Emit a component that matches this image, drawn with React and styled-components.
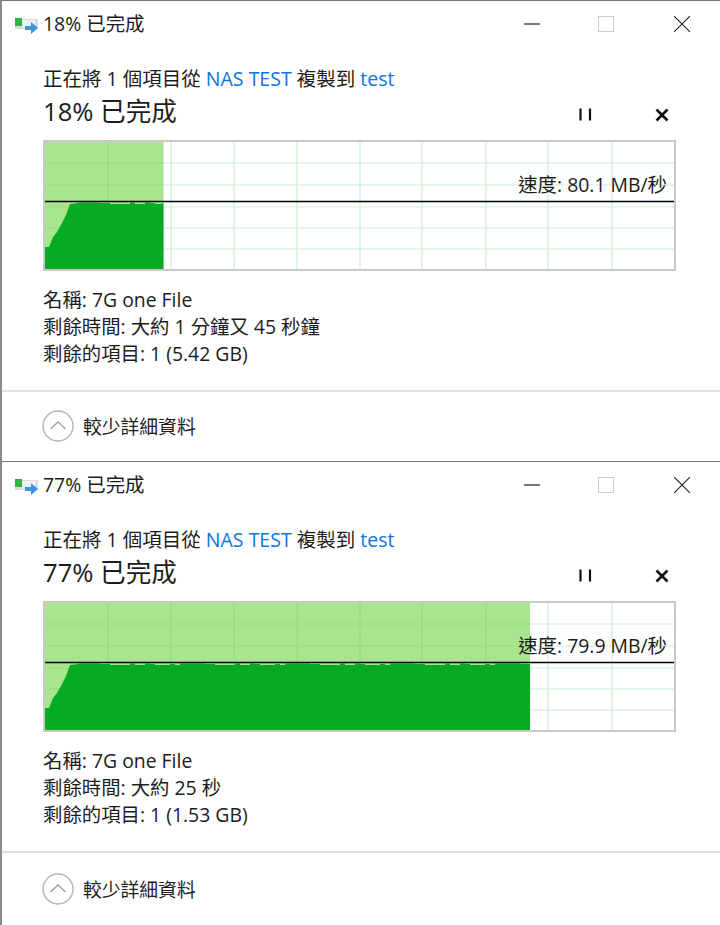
import React from "react";
import styled, { createGlobalStyle } from "styled-components";

const GlobalStyle = createGlobalStyle`
  html, body {
    margin: 0;
    padding: 0;
    background: #ffffff;
  }
  body {
    font-family: "Open Sans", "Noto Sans CJK TC", sans-serif;
    color: #1c1c1c;
  }
`;

const Page = styled.div`
  width: 720px;
`;

const Window = styled.section`
  box-sizing: border-box;
  width: 720px;
  height: ${(p) => p.$height}px;
  border-top: 1px solid #777777;
  border-left: 2px solid #8a8a8a;
  display: flex;
  flex-direction: column;
`;

const TitleBar = styled.header`
  display: flex;
  align-items: center;
  height: 46px;
  padding-left: 10px;
  padding-right: 30px;
`;

const TitleIcon = styled.svg`
  width: 26px;
  height: 20px;
  margin-right: 5px;
  flex: none;
`;

const TitleText = styled.div`
  font-size: 19.4px;
  line-height: 46px;
  flex: 1;
`;

const WinButton = styled.button`
  width: 16px;
  height: 16px;
  padding: 0;
  margin-left: 58px;
  border: none;
  background: none;
  display: block;
  &:last-child {
    margin-left: 60px;
  }
  svg {
    display: block;
  }
`;

const Body = styled.div`
  height: 343px;
  flex: none;
  padding: 0 42px 0 41px;
  display: flex;
  flex-direction: column;
`;

const FromTo = styled.div`
  font-size: 19.5px;
  line-height: 24px;
  margin-top: 20px;
`;

const Link = styled.span`
  color: #0d74e0;
`;

const HeadRow = styled.div`
  display: flex;
  align-items: center;
  height: 32px;
  margin-top: 5px;
`;

const Heading = styled.h1`
  flex: 1;
  margin: 0;
  font-size: 25.6px;
  font-weight: 400;
  line-height: 32px;
`;

const ActionButton = styled.button`
  width: 16px;
  height: 16px;
  padding: 0;
  border: none;
  background: none;
  margin-left: ${(p) => p.$gap}px;
  margin-right: ${(p) => p.$end}px;
  margin-top: 5px;
  svg {
    display: block;
  }
`;

const Graph = styled.div`
  position: relative;
  box-sizing: border-box;
  width: 633px;
  height: 131px;
  margin-top: 12px;
  border: 2px solid #c9c9c9;
  svg {
    display: block;
  }
`;

const Speed = styled.div`
  position: absolute;
  right: 7px;
  top: 31px;
  font-size: 19.4px;
  line-height: 24px;
`;

const Details = styled.div`
  margin-top: 15px;
  font-size: 19.4px;
  line-height: 27px;
`;

const Footer = styled.footer`
  flex: 1;
  border-top: 2px solid #e2e2e2;
  box-sizing: border-box;
  display: flex;
  align-items: center;
  padding-left: 40px;
  padding-bottom: 1px;
  gap: 9px;
  font-size: 18.8px;
`;

const MoreIcon = styled.svg`
  width: 32px;
  height: 32px;
  flex: none;
`;

const GRID_X = [63, 126, 189, 252, 315, 377, 441, 503, 567];
const GRID_Y = [21, 43, 65, 86, 107];

// top edge of the throughput area in 5px steps, repeats across the run
const TOP_EDGE = [60.5, 60.5, 60.5, 60.5, 61, 61, 62, 62, 62, 62, 60.5, 62, 62, 60.5, 61, 62, 62, 62, 61, 62, 60.5];

function throughput(end) {
  const points = [
    [0, 127],
    [0, 105],
    [4, 105],
    [8, 95],
    [12, 90],
    [17, 81],
    [21, 73],
    [25, 62],
    [30, 61.5],
  ];
  for (let x = 35, i = 0; x < end; x += 5, i++) {
    const y = TOP_EDGE[i % TOP_EDGE.length];
    points.push([x, y], [x + 5, y]);
  }
  return [...points.filter((p) => p[0] < end), [end, 61], [end, 127]]
    .map((p) => p.join(","))
    .join(" ");
}

function ThroughputChart({ end }) {
  return (
    <svg width="629" height="127" viewBox="0 0 629 127">
      <rect width="629" height="127" fill="#ffffff" />
      {GRID_X.map((x) => (
        <line key={x} x1={x} x2={x} y1="0" y2="127" stroke="#cbf0d3" strokeWidth="1.2" />
      ))}
      {GRID_Y.map((y) => (
        <line key={y} x1="0" x2="629" y1={y} y2={y} stroke="#cbf0d3" strokeWidth="1.2" />
      ))}
      <rect width={end} height="127" fill="#a9e58e" />
      {GRID_X.filter((x) => x < end).map((x) => (
        <line key={x} x1={x} x2={x} y1="0" y2="127" stroke="#9bdc82" strokeWidth="1.4" />
      ))}
      {GRID_Y.map((y) => (
        <line key={y} x1="0" x2={end} y1={y} y2={y} stroke="#9bdc82" strokeWidth="1.2" />
      ))}
      <polygon points={throughput(end)} fill="#06ab23" />
      <line x1="0" x2="629" y1="59.5" y2="59.5" stroke="#000000" strokeWidth="1.4" />
    </svg>
  );
}

function CopyIcon() {
  return (
    <TitleIcon viewBox="0 0 26 20">
      <rect x="3" y="5" width="23" height="10" fill="#dcdcdc" />
      <rect x="10" y="6" width="13" height="8" fill="#f2f2f2" />
      <rect x="3" y="4" width="7" height="8" fill="#2fb344" />
      <path d="M13 12h6V8l7 6-7 6v-4h-6z" fill="#3a96e2" />
    </TitleIcon>
  );
}

function CopyWindow({ height, percent, end, speed, time, remaining }) {
  return (
    <Window $height={height}>
      <TitleBar>
        <CopyIcon />
        <TitleText>{percent}% 已完成</TitleText>
        <WinButton>
          <svg width="16" height="16" viewBox="0 0 16 16">
            <path d="M0 8h16" stroke="#555555" strokeWidth="1.6" />
          </svg>
        </WinButton>
        <WinButton>
          <svg width="16" height="16" viewBox="0 0 16 16">
            <rect x="0.5" y="0.5" width="15" height="15" fill="none" stroke="#cccccc" />
          </svg>
        </WinButton>
        <WinButton>
          <svg width="16" height="16" viewBox="0 0 16 16">
            <path d="M0 0l16 16M16 0L0 16" stroke="#222222" strokeWidth="1.1" />
          </svg>
        </WinButton>
      </TitleBar>
      <Body>
        <FromTo>
          正在將 1 個項目從 <Link>NAS TEST</Link> 複製到 <Link>test</Link>
        </FromTo>
        <HeadRow>
          <Heading>{percent}% 已完成</Heading>
          <ActionButton $gap={0} $end={0}>
            <svg width="16" height="16" viewBox="0 0 16 16">
              <path d="M3.5 1.5v12M13 1.5v12" stroke="#111111" strokeWidth="2.2" />
            </svg>
          </ActionButton>
          <ActionButton $gap={61} $end={8}>
            <svg width="16" height="16" viewBox="0 0 16 16">
              <path d="M2.5 2.5l11 11M13.5 2.5l-11 11" stroke="#111111" strokeWidth="2.6" />
            </svg>
          </ActionButton>
        </HeadRow>
        <Graph>
          <ThroughputChart end={end} />
          <Speed>速度: {speed} MB/秒</Speed>
        </Graph>
        <Details>
          <div>名稱: 7G one File</div>
          <div>剩餘時間: {time}</div>
          <div>剩餘的項目: 1 ({remaining} GB)</div>
        </Details>
      </Body>
      <Footer>
        <MoreIcon viewBox="0 0 32 32">
          <circle cx="16" cy="16" r="15" fill="none" stroke="#b4b4b4" strokeWidth="1.4" />
          <path d="M8.5 19l7.5-7 7.5 7" fill="none" stroke="#a0a0a0" strokeWidth="1.4" />
        </MoreIcon>
        較少詳細資料
      </Footer>
    </Window>
  );
}

export default function App() {
  return (
    <Page>
      <GlobalStyle />
      <CopyWindow height={461} percent={18} end={118.5} speed="80.1" time="大約 1 分鐘又 45 秒鐘" remaining="5.42" />
      <CopyWindow height={464} percent={77} end={485} speed="79.9" time="大約 25 秒" remaining="1.53" />
    </Page>
  );
}
